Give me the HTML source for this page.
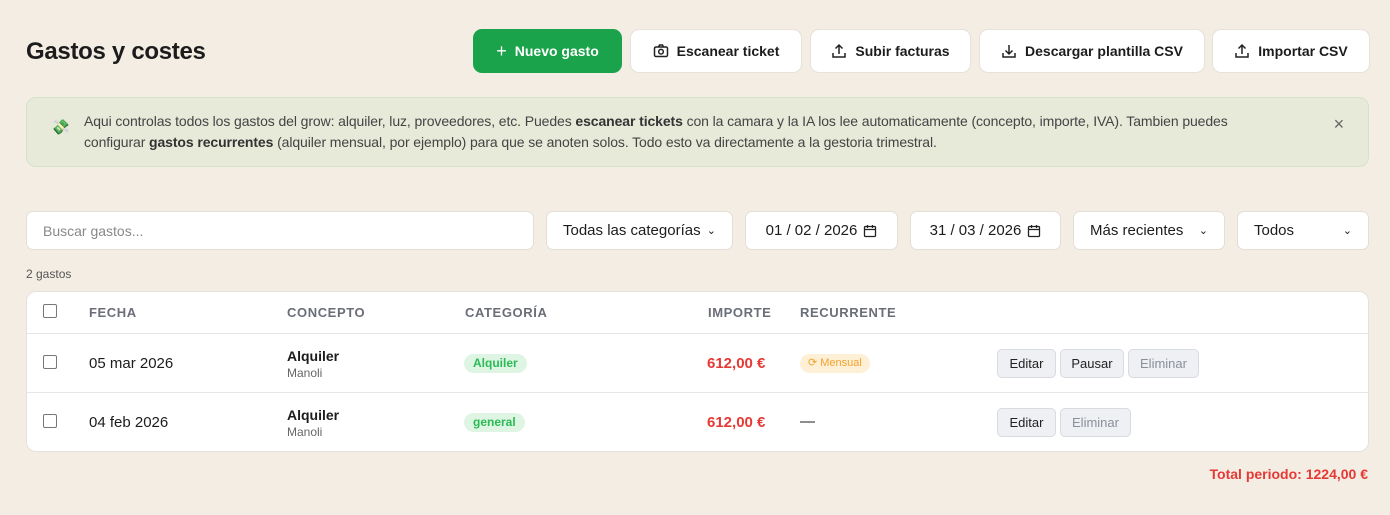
<!DOCTYPE html>
<html><head><meta charset="utf-8"><style>
*{box-sizing:border-box;margin:0;padding:0}
body{width:1390px;height:515px;background:#f4ede3;font-family:"Liberation Sans",sans-serif;color:#1c1c1c;position:relative;overflow:hidden}
.abs{position:absolute}
h1{position:absolute;left:26px;top:38px;font-size:24px;font-weight:bold;letter-spacing:-0.3px}
.btn{position:absolute;top:29px;height:44px;border-radius:9px;background:#fff;border:1px solid #e6e1d9;display:flex;align-items:center;justify-content:center;font-size:14px;font-weight:bold;gap:8px}
.btn svg{width:16px;height:16px}
.green{background:#1ba34b;color:#fff;border-color:#1ba34b}
.info{position:absolute;left:26px;top:97px;width:1343px;height:70px;border-radius:10px;background:#e7e9d9;border:1px solid #d4e2cc;font-size:14px;color:#444;line-height:21px;padding:13px 0 0 57px;letter-spacing:-0.1px}
.info b{color:#333}
.inp{position:absolute;top:211px;height:39px;background:#fff;border:1px solid #e3ded6;border-radius:7px;font-size:15px;display:flex;align-items:center;padding:0 16px}
.card{position:absolute;left:26px;top:291px;width:1343px;height:161px;background:#fff;border:1px solid #e4e1dc;border-radius:10px}
.th{position:absolute;top:305px;font-size:13px;font-weight:bold;color:#6b6e78;letter-spacing:0.6px}
.cb{position:absolute;left:43px;width:14px;height:14px;border:1px solid #777;border-radius:2px;background:#fff}
.line{position:absolute;left:27px;width:1341px;height:1px;background:#e6e6e6}
.t{position:absolute;font-size:15px}
.pill{position:absolute;height:19px;border-radius:10px;font-size:12px;font-weight:bold;padding:0 9px;line-height:19px;background:#dff5e3;color:#2bbb55}
.ab{position:absolute;height:29px;border-radius:5px;background:#eef0f3;border:1px solid #d8dbe0;font-size:13px;display:flex;align-items:center;justify-content:center;color:#222}
.dis{color:#8a8f99}
.red{color:#e53935;font-weight:bold}
.cal{width:14px;height:14px;margin-left:6px}
</style></head><body>
<h1>Gastos y costes</h1>
<div class="btn green" style="left:473px;width:149px"><span style="font-size:18px;font-weight:normal">+</span>Nuevo gasto</div>
<div class="btn" style="left:630px;width:172px"><svg viewBox="0 0 16 16" fill="none" stroke="#222" stroke-width="1.5"><rect x="1.5" y="4" width="13" height="9.5" rx="1.5"/><path d="M5.5 4l1-2h3l1 2"/><circle cx="8" cy="8.7" r="2.3"/></svg>Escanear ticket</div>
<div class="btn" style="left:810px;width:161px"><svg viewBox="0 0 16 16" fill="none" stroke="#222" stroke-width="1.5"><path d="M8 11V2M4.5 5.5L8 2l3.5 3.5M2 10v4h12v-4"/></svg>Subir facturas</div>
<div class="btn" style="left:979px;width:226px"><svg viewBox="0 0 16 16" fill="none" stroke="#222" stroke-width="1.5"><path d="M8 2v9M4.5 7.5L8 11l3.5-3.5M2 10v4h12v-4"/></svg>Descargar plantilla CSV</div>
<div class="btn" style="left:1212px;width:158px"><svg viewBox="0 0 16 16" fill="none" stroke="#222" stroke-width="1.5"><path d="M8 11V2M4.5 5.5L8 2l3.5 3.5M2 10v4h12v-4"/></svg>Importar CSV</div>
<div class="info"><span class="abs" style="left:24px;top:19px;font-size:15px">💸</span>Aqui controlas todos los gastos del grow: alquiler, luz, proveedores, etc. Puedes <b>escanear tickets</b> con la camara y la IA los lee automaticamente (concepto, importe, IVA). Tambien puedes<br>configurar <b>gastos recurrentes</b> (alquiler mensual, por ejemplo) para que se anoten solos. Todo esto va directamente a la gestoria trimestral.<span class="abs" style="right:24px;top:16px;font-size:18px;color:#666">×</span></div>
<div class="inp" style="left:26px;width:508px;color:#888;font-size:14px">Buscar gastos...</div>
<div class="inp" style="left:546px;width:187px;justify-content:space-between">Todas las categorías<span style="font-size:11px">⌄</span></div>
<div class="inp" style="left:745px;width:153px;justify-content:center">01 / 02 / 2026<svg class="cal" viewBox="0 0 14 14" fill="none" stroke="#222" stroke-width="1.3"><rect x="1.5" y="2.5" width="11" height="10" rx="1"/><path d="M1.5 5.5h11M4.5 1v3M9.5 1v3"/></svg></div>
<div class="inp" style="left:910px;width:151px;justify-content:center">31 / 03 / 2026<svg class="cal" viewBox="0 0 14 14" fill="none" stroke="#222" stroke-width="1.3"><rect x="1.5" y="2.5" width="11" height="10" rx="1"/><path d="M1.5 5.5h11M4.5 1v3M9.5 1v3"/></svg></div>
<div class="inp" style="left:1073px;width:152px;justify-content:space-between">Más recientes<span style="font-size:11px">⌄</span></div>
<div class="inp" style="left:1237px;width:132px;justify-content:space-between">Todos<span style="font-size:11px">⌄</span></div>
<div class="abs" style="left:26px;top:267px;font-size:12px;color:#555">2 gastos</div>
<div class="card"></div>
<div class="cb" style="top:304px"></div>
<div class="th" style="left:89px">FECHA</div><div class="th" style="left:287px">CONCEPTO</div><div class="th" style="left:465px">CATEGORÍA</div><div class="th" style="left:708px">IMPORTE</div><div class="th" style="left:800px">RECURRENTE</div>
<div class="line" style="top:333px"></div>
<div class="line" style="top:392px"></div>
<div class="cb" style="top:355px"></div>
<div class="t" style="left:89px;top:355px">05 mar 2026</div>
<div class="t" style="left:287px;top:348px;font-weight:bold;font-size:14px">Alquiler</div>
<div class="t" style="left:287px;top:366px;font-size:12px;color:#666">Manoli</div>
<div class="pill" style="left:464px;top:354px">Alquiler</div>
<div class="t red" style="left:707px;top:355px">612,00 €</div>
<div class="pill" style="left:800px;top:354px;background:#fdf0d6;color:#f2a22c;font-weight:normal;font-size:11px;padding:0 8px">⟳ Mensual</div>
<div class="ab" style="left:997px;top:349px;width:59px">Editar</div>
<div class="ab" style="left:1060px;top:349px;width:64px">Pausar</div>
<div class="ab dis" style="left:1128px;top:349px;width:71px">Eliminar</div>
<div class="cb" style="top:414px"></div>
<div class="t" style="left:89px;top:414px">04 feb 2026</div>
<div class="t" style="left:287px;top:407px;font-weight:bold;font-size:14px">Alquiler</div>
<div class="t" style="left:287px;top:425px;font-size:12px;color:#666">Manoli</div>
<div class="pill" style="left:464px;top:413px">general</div>
<div class="t red" style="left:707px;top:414px">612,00 €</div>
<div class="t" style="left:800px;top:413px">—</div>
<div class="ab" style="left:997px;top:408px;width:59px">Editar</div>
<div class="ab dis" style="left:1060px;top:408px;width:71px">Eliminar</div>
<div class="t red" style="right:22px;top:466px;font-size:14px">Total periodo: 1224,00 €</div>
</body></html>
